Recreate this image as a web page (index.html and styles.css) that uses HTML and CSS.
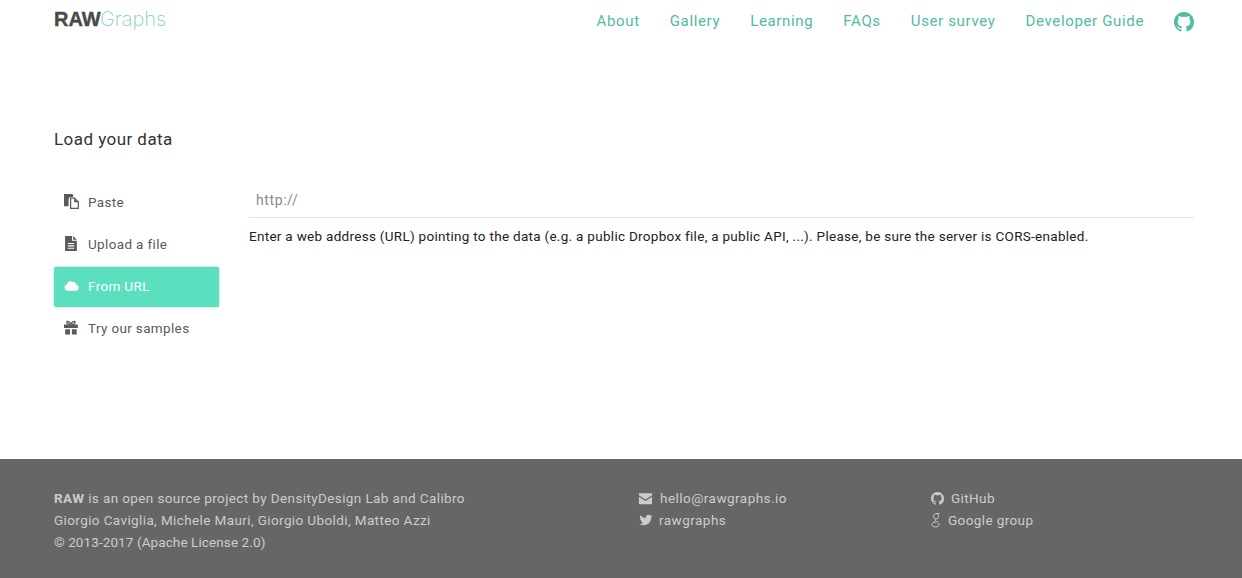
FILE: index.html
```html
<!DOCTYPE html>
<html lang="en">
<head>
    <meta charset="UTF-8">
    <title>RAWGraphs</title>
    <link rel="stylesheet" href="styles.css">
</head>
<body>
    <header class="topbar">
        <a href="#" class="logo"><span class="logo-raw">RAW</span><span class="logo-graphs">Graphs</span></a>
        <nav class="nav">
            <a href="#">About</a>
            <a href="#">Gallery</a>
            <a href="#">Learning</a>
            <a href="#">FAQs</a>
            <a href="#">User survey</a>
            <a href="#">Developer Guide</a>
            <a href="#" class="nav-git">
                <svg class="git-icon" viewBox="0 0 16 16"><path d="M8 0C3.58 0 0 3.58 0 8c0 3.54 2.29 6.53 5.47 7.59.4.07.55-.17.55-.38 0-.19-.01-.82-.01-1.49-2.01.37-2.53-.49-2.69-.94-.09-.23-.48-.94-.82-1.13-.28-.15-.68-.52-.01-.53.63-.01 1.08.58 1.23.82.72 1.21 1.87.87 2.33.66.07-.52.28-.87.51-1.07-1.78-.2-3.64-.89-3.64-3.95 0-.87.31-1.59.82-2.15-.08-.2-.36-1.02.08-2.12 0 0 .67-.21 2.2.82.64-.18 1.32-.27 2-.27.68 0 1.36.09 2 .27 1.53-1.04 2.2-.82 2.2-.82.44 1.1.16 1.92.08 2.12.51.56.82 1.27.82 2.15 0 3.07-1.87 3.75-3.65 3.95.29.25.54.73.54 1.48 0 1.07-.01 1.93-.01 2.2 0 .21.15.46.55.38A8.013 8.013 0 0016 8c0-4.42-3.58-8-8-8z"/></svg>
            </a>
        </nav>
    </header>

    <main class="content">
        <h2 class="section-title">Load your data</h2>
        <div class="loader">
            <ul class="tabs">
                <li class="tab">
                    <svg class="tab-icon" viewBox="1 1 14.700 14.700"><path d="M1 1h8l1 1v2H7L5.500 5.500V13H1z"/><path d="M7.500 5h4v3.500H15V15H7.500z" fill="#fff" stroke="currentColor" stroke-width="1.200"/><path d="M12 5l3 3h-3z"/></svg>
                    Paste
                </li>
                <li class="tab">
                    <svg class="tab-icon" viewBox="1.500 1 14 14"><path fill-rule="evenodd" d="M2.500 1H9v4.500h4.500V15h-11zM10 1l3.500 3.500H10zM5 7.500v1h6v-1zM5 9.700v1h6v-1zM5 11.900v1h6v-1z"/></svg>
                    Upload a file
                </li>
                <li class="tab tab-active">
                    <svg class="tab-icon" viewBox="0 0 16 16"><path d="M4 13.500A3.500 3.500 0 0 1 3.300 6.600 3.600 3.600 0 0 1 8.900 4.200 3 3 0 0 1 13 6.800 3.400 3.400 0 0 1 12.500 13.500z"/></svg>
                    From URL
                </li>
                <li class="tab">
                    <svg class="tab-icon" viewBox="2 1.500 13 13"><path fill-rule="evenodd" d="M2 5.500h12v3H2zM3 9.500h4.200V14H3zM8.800 9.500H13V14H8.800zM8 5.200C6.500 5.500 4 5.500 3.800 3.600 3.800 1.800 6.500 1.500 8 4.200 9.500 1.500 12.200 1.800 12.200 3.600 12 5.500 9.500 5.500 8 5.200zM7 4.500C6.400 3.300 5 3 5 3.800 5.100 4.500 6.200 4.500 7 4.500zM9 4.500C9.800 4.500 10.900 4.500 11 3.800 11 3 9.600 3.300 9 4.500z"/></svg>
                    Try our samples
                </li>
            </ul>
            <div class="url-pane">
                <input class="url-input" type="text" placeholder="http://">
                <p class="url-help">Enter a web address (URL) pointing to the data (e.g. a public Dropbox file, a public API, ...). Please, be sure the server is CORS-enabled.</p>
            </div>
        </div>
    </main>

    <footer class="footer">
        <div class="footer-about">
            <p><strong>RAW</strong> is an open source project by DensityDesign Lab and Calibro</p>
            <p>Giorgio Caviglia, Michele Mauri, Giorgio Uboldi, Matteo Azzi</p>
            <p class="footer-license">© 2013-2017 (Apache License 2.0)</p>
        </div>
        <div class="footer-contact">
            <p class="foot-row">
                <svg class="foot-icon" viewBox="0 0 16 16"><path d="M1 2.500h14v2L8 9 1 4.500zM1 6.200l7 4.500 7-4.500V14H1z"/></svg>
                hello@rawgraphs.io
            </p>
            <p class="foot-row">
                <svg class="foot-icon foot-icon-tw" viewBox="0 0 24 24"><path d="M23 5c-.8.4-1.700.6-2.600.7.9-.6 1.600-1.400 2-2.500-.9.500-1.900.9-2.900 1.100A4.600 4.600 0 0 0 11.700 8.500C7.900 8.300 4.500 6.500 2.300 3.700c-1.200 2.100-.6 4.800 1.400 6.100-.8 0-1.500-.2-2.100-.6 0 2.200 1.600 4.100 3.700 4.600-.7.200-1.400.2-2.100.1.600 1.800 2.300 3.100 4.300 3.200A9.300 9.300 0 0 1 .7 19c2.100 1.300 4.500 2.100 7.100 2.100 8.600 0 13.500-7.300 13.200-13.800.9-.6 1.700-1.400 2-2.300z"/></svg>
                rawgraphs
            </p>
        </div>
        <div class="footer-links">
            <p class="foot-row">
                <svg class="foot-icon foot-icon-git" viewBox="0 0 16 16"><path d="M8 0C3.58 0 0 3.58 0 8c0 3.54 2.29 6.53 5.47 7.59.4.07.55-.17.55-.38 0-.19-.01-.82-.01-1.49-2.01.37-2.53-.49-2.69-.94-.09-.23-.48-.94-.82-1.13-.28-.15-.68-.52-.01-.53.63-.01 1.08.58 1.23.82.72 1.21 1.87.87 2.33.66.07-.52.28-.87.51-1.07-1.78-.2-3.64-.89-3.64-3.95 0-.87.31-1.59.82-2.15-.08-.2-.36-1.02.08-2.12 0 0 .67-.21 2.2.82.64-.18 1.32-.27 2-.27.68 0 1.36.09 2 .27 1.53-1.04 2.2-.82 2.2-.82.44 1.1.16 1.92.08 2.12.51.56.82 1.27.82 2.15 0 3.07-1.87 3.75-3.65 3.95.29.25.54.73.54 1.48 0 1.07-.01 1.93-.01 2.2 0 .21.15.46.55.38A8.013 8.013 0 0016 8c0-4.42-3.58-8-8-8z"/></svg>
                GitHub
            </p>
            <p class="foot-row">
                <svg class="foot-icon foot-icon-g" viewBox="0 0 10 16"><path d="M8.500 1.500H5.500C3.500 1.500 2.500 3 2.500 4.300 2.500 5.800 3.700 7 5 7 6.500 7 7.500 5.800 7.500 4.400 7.500 3 6.500 1.500 5.500 1.500M5 7C3.500 8 4.500 8.800 5.500 9.500 7 10.500 8 11.200 8 12.500 8 14 6.500 15 4.500 15 2.500 15 1 14 1 12.600 1 11.200 2.500 10 5 10" fill="none" stroke="currentColor" stroke-width="1"/></svg>
                Google group
            </p>
        </div>
    </footer>
</body>
</html>
```

FILE: styles.css
```css
html, body {
    height: 100%;
}
body {
    margin: 0;
    padding: 0;
    display: flex;
    flex-direction: column;
    font-family: 'Roboto', sans-serif;
    font-size: 14px;
    letter-spacing: 0.25px;
    background-color: white;
    color: #333;
}
.topbar {
    display: flex;
    justify-content: space-between;
    align-items: flex-start;
    height: 42px;
    padding: 0 48px 0 54px;
}
.logo {
    display: flex;
    margin-top: 8px;
    font-size: 20px;
    line-height: 22px;
    letter-spacing: 0;
    text-decoration: none;
}
.logo-raw {
    width: 46px;
    font-family: 'Liberation Sans', sans-serif;
    font-size: 20px;
    font-weight: 700;
    color: #4a4a4a;
    -webkit-text-stroke: 0.4px #4a4a4a;
}
.logo-graphs {
    font-family: 'Inter', sans-serif;
    font-weight: 200;
    color: #7fcfbe;
}
.nav {
    display: flex;
    align-items: center;
    gap: 30px;
    height: 42px;
}
.nav a {
    font-size: 15px;
    letter-spacing: 0.65px;
    color: #4fbaa5;
    text-decoration: none;
}
.nav .nav-git {
    display: flex;
    height: 20px;
    margin-top: 2px;
}
.git-icon {
    width: 20px;
    height: 20px;
    fill: #4fbaa5;
}
.content {
    flex: 1;
    padding: 0 48px 0 54px;
}
.section-title {
    margin: 86px 0 0;
    font-size: 17px;
    font-weight: 400;
    line-height: 22px;
    letter-spacing: 0.45px;
    color: #333;
}
.loader {
    display: flex;
    gap: 30px;
    margin-top: 33px;
}
.tabs {
    flex: none;
    width: 165px;
    margin: 0;
    padding: 0;
    list-style-type: none;
}
.tab {
    display: flex;
    align-items: center;
    gap: 9px;
    box-sizing: border-box;
    height: 40px;
    margin-bottom: 2px;
    padding: 0 0 2px 10px;
    border-radius: 2px;
    color: #5a5a5a;
    font-size: 13.5px;
    letter-spacing: 0.35px;
}
.tab-active {
    background-color: #5cdfbf;
    color: white;
    box-shadow: 0 0 2px rgba(60, 180, 150, 0.7);
}
.tab-icon {
    width: 15px;
    height: 15px;
    margin-top: -2px;
    fill: currentColor;
}
.url-pane {
    flex: 1;
}
.url-input {
    display: block;
    box-sizing: border-box;
    width: 100%;
    height: 35px;
    margin-top: 0;
    padding: 0 7px;
    border: none;
    border-bottom: 1px solid #e2e2e2;
    outline: none;
    font-family: inherit;
    font-size: 14px;
    letter-spacing: 0.6px;
}
.url-input::placeholder {
    color: #8a8a8a;
}
.url-help {
    margin: 9px 0 0;
    font-size: 13.5px;
    line-height: 18px;
    letter-spacing: 0.29px;
    color: #222;
}
.footer {
    display: flex;
    height: 119px;
    box-sizing: border-box;
    padding: 28px 0 0 54px;
    background-color: #666;
    color: #ccc;
    font-size: 13.5px;
    letter-spacing: 0.39px;
}
.footer p {
    margin: 0;
    line-height: 22px;
}
.footer .footer-license {
    letter-spacing: 0.1px;
}
.footer .foot-row {
    display: flex;
    align-items: center;
    height: 22px;
}
.footer-about {
    width: 584px;
}
.footer-contact {
    width: 293px;
    letter-spacing: 0.47px;
}
.foot-icon {
    width: 15px;
    height: 15px;
    margin-right: 7px;
    fill: currentColor;
}
.foot-icon-tw {
    width: 14px;
    height: 14px;
    margin-left: 1px;
    margin-right: 6px;
}
.foot-icon-git {
    width: 13px;
    height: 13px;
}
.foot-icon-g {
    width: 10px;
    height: 16px;
    fill: none;
}
```
